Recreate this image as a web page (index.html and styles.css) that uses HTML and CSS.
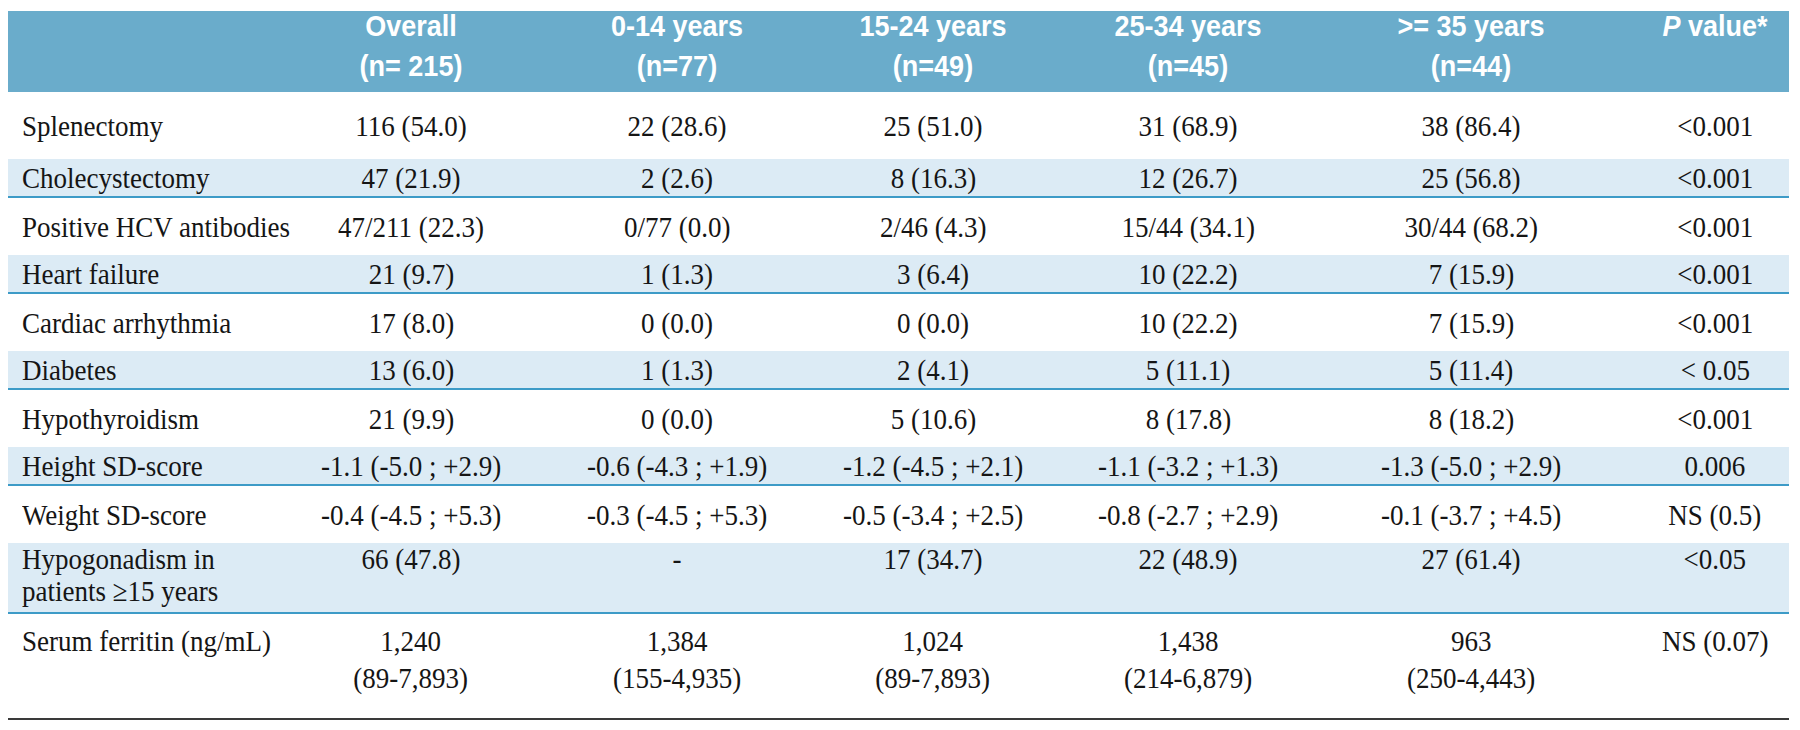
FILE: index.html
```html
<!DOCTYPE html>
<html>
<head>
<meta charset="utf-8">
<link rel="stylesheet" href="styles.css">
</head>
<body>
<table class="t">
  <colgroup>
    <col class="c-label">
    <col class="c-all">
    <col class="c-014">
    <col class="c-1524">
    <col class="c-2534">
    <col class="c-35">
    <col class="c-p">
  </colgroup>
  <thead>
    <tr>
      <th></th>
      <th><div class="hd">Overall<br>(n= 215)</div></th>
      <th><div class="hd">0-14 years<br>(n=77)</div></th>
      <th><div class="hd">15-24 years<br>(n=49)</div></th>
      <th><div class="hd">25-34 years<br>(n=45)</div></th>
      <th><div class="hd">&gt;= 35 years<br>(n=44)</div></th>
      <th class="pcol"><div class="hd"><i>P</i> value*</div></th>
    </tr>
  </thead>
  <tbody>
    <tr class="first">
      <td><span class="x">Splenectomy</span></td><td><span class="x">116 (54.0)</span></td><td><span class="x">22 (28.6)</span></td><td><span class="x">25 (51.0)</span></td><td><span class="x">31 (68.9)</span></td><td><span class="x">38 (86.4)</span></td><td class="pcol"><span class="x">&lt;0.001</span></td>
    </tr>
    <tr class="alt">
      <td><span class="x">Cholecystectomy</span></td><td><span class="x">47 (21.9)</span></td><td><span class="x">2 (2.6)</span></td><td><span class="x">8 (16.3)</span></td><td><span class="x">12 (26.7)</span></td><td><span class="x">25 (56.8)</span></td><td class="pcol"><span class="x">&lt;0.001</span></td>
    </tr>
    <tr>
      <td><span class="x">Positive HCV antibodies</span></td><td><span class="x">47/211 (22.3)</span></td><td><span class="x">0/77 (0.0)</span></td><td><span class="x">2/46 (4.3)</span></td><td><span class="x">15/44 (34.1)</span></td><td><span class="x">30/44 (68.2)</span></td><td class="pcol"><span class="x">&lt;0.001</span></td>
    </tr>
    <tr class="alt">
      <td><span class="x">Heart failure</span></td><td><span class="x">21 (9.7)</span></td><td><span class="x">1 (1.3)</span></td><td><span class="x">3 (6.4)</span></td><td><span class="x">10 (22.2)</span></td><td><span class="x">7 (15.9)</span></td><td class="pcol"><span class="x">&lt;0.001</span></td>
    </tr>
    <tr>
      <td><span class="x">Cardiac arrhythmia</span></td><td><span class="x">17 (8.0)</span></td><td><span class="x">0 (0.0)</span></td><td><span class="x">0 (0.0)</span></td><td><span class="x">10 (22.2)</span></td><td><span class="x">7 (15.9)</span></td><td class="pcol"><span class="x">&lt;0.001</span></td>
    </tr>
    <tr class="alt">
      <td><span class="x">Diabetes</span></td><td><span class="x">13 (6.0)</span></td><td><span class="x">1 (1.3)</span></td><td><span class="x">2 (4.1)</span></td><td><span class="x">5 (11.1)</span></td><td><span class="x">5 (11.4)</span></td><td class="pcol"><span class="x">&lt; 0.05</span></td>
    </tr>
    <tr>
      <td><span class="x">Hypothyroidism</span></td><td><span class="x">21 (9.9)</span></td><td><span class="x">0 (0.0)</span></td><td><span class="x">5 (10.6)</span></td><td><span class="x">8 (17.8)</span></td><td><span class="x">8 (18.2)</span></td><td class="pcol"><span class="x">&lt;0.001</span></td>
    </tr>
    <tr class="alt">
      <td><span class="x">Height SD-score</span></td><td><span class="x">-1.1 (-5.0 ; +2.9)</span></td><td><span class="x">-0.6 (-4.3 ; +1.9)</span></td><td><span class="x">-1.2 (-4.5 ; +2.1)</span></td><td><span class="x">-1.1 (-3.2 ; +1.3)</span></td><td><span class="x">-1.3 (-5.0 ; +2.9)</span></td><td class="pcol"><span class="x">0.006</span></td>
    </tr>
    <tr>
      <td><span class="x">Weight SD-score</span></td><td><span class="x">-0.4 (-4.5 ; +5.3)</span></td><td><span class="x">-0.3 (-4.5 ; +5.3)</span></td><td><span class="x">-0.5 (-3.4 ; +2.5)</span></td><td><span class="x">-0.8 (-2.7 ; +2.9)</span></td><td><span class="x">-0.1 (-3.7 ; +4.5)</span></td><td class="pcol"><span class="x">NS (0.5)</span></td>
    </tr>
    <tr class="alt two">
      <td><span class="x">Hypogonadism in<br>patients ≥15 years</span></td><td><span class="x">66 (47.8)</span></td><td><span class="x">-</span></td><td><span class="x">17 (34.7)</span></td><td><span class="x">22 (48.9)</span></td><td><span class="x">27 (61.4)</span></td><td class="pcol"><span class="x">&lt;0.05</span></td>
    </tr>
    <tr class="last">
      <td><span class="x">Serum ferritin (ng/mL)</span></td><td><span class="x">1,240<br>(89-7,893)</span></td><td><span class="x">1,384<br>(155-4,935)</span></td><td><span class="x">1,024<br>(89-7,893)</span></td><td><span class="x">1,438<br>(214-6,879)</span></td><td><span class="x">963<br>(250-4,443)</span></td><td class="pcol"><span class="x">NS (0.07)</span></td>
    </tr>
  </tbody>
</table>
</body>
</html>
```

FILE: styles.css
```css
html, body {
  margin: 0;
  padding: 0;
  background: #ffffff;
}

.t {
  margin: 11px 0 0 8px;
  width: 1781px;
  table-layout: fixed;
  border-collapse: collapse;
  border-spacing: 0;
  font-family: "Liberation Serif", "Times New Roman", serif;
  font-size: 30px;
  color: #151515;
}

.c-label { width: 273px; }
.c-all { width: 260px; }
.c-014 { width: 272px; }
.c-1524 { width: 240px; }
.c-2534 { width: 270px; }
.c-35 { width: 296px; }
.c-p { width: 170px; }

.t th {
  background: #6aaccb;
  color: #ffffff;
  font-family: "Liberation Sans", Arial, sans-serif;
  font-weight: bold;
  font-size: 30px;
  line-height: 40px;
  height: 81px;
  padding: 0;
  vertical-align: top;
  text-align: center;
  white-space: nowrap;
}

/* condensed look of the original typefaces */
.hd {
  margin-top: -5px;
  transform: scaleX(0.9);
}

.x {
  display: inline-block;
  transform: scaleX(0.9);
}

.t th.pcol, .t td.pcol {
  padding-left: 22px;
}

.t td {
  padding: 0;
  height: 57px;
  line-height: 32px;
  text-align: center;
  vertical-align: middle;
  white-space: nowrap;
}

.t td:first-child {
  text-align: left;
  padding-left: 14px;
}

.t td:first-child .x {
  transform-origin: 0 50%;
}

.t tr.first td {
  height: 67px;
}

.t tr.alt td {
  background: #dcebf5;
  height: 37px;
  border-bottom: 2px solid #3d9bc7;
}

.t tr.two td {
  height: 69px;
  vertical-align: top;
  padding-top: 0;
}

.t tr.last td {
  height: 96px;
  vertical-align: top;
  padding-top: 8px;
  line-height: 37px;
  border-bottom: 2px solid #3a3a3a;
}
```
